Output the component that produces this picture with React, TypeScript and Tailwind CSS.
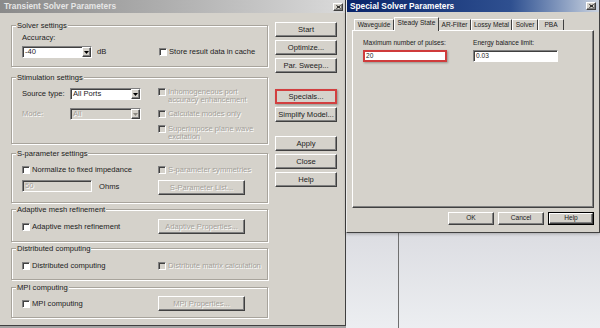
import React from "react";

const raised =
  "border border-t-white border-l-white border-r-[#404040] border-b-[#404040] shadow-[inset_-1px_-1px_0_#808080]";
const sunken =
  "border border-t-[#808080] border-l-[#808080] border-r-white border-b-white shadow-[inset_1px_1px_0_#404040]";
const dis = "text-[#a4a19a] [text-shadow:1px_1px_0_#fff]";

function Arrow({ disabled }: { disabled?: boolean }) {
  return (
    <svg width="5" height="3" viewBox="0 0 5 3">
      <path d="M0 0h5L2.5 3z" fill={disabled ? "#8a8780" : "#000"} />
    </svg>
  );
}

function CloseX() {
  return (
    <svg width="5" height="4" viewBox="0 0 5 4">
      <path d="M0.5 0.5L4.5 3.5M4.5 0.5L0.5 3.5" stroke="#000" strokeWidth="1" />
    </svg>
  );
}

function Check({
  children,
  disabled,
  className = "",
}: {
  children: React.ReactNode;
  disabled?: boolean;
  className?: string;
}) {
  return (
    <div className={`flex items-start gap-[2px] ${className}`}>
      <div
        className={`w-[8px] h-[8px] shrink-0 ${sunken} ${
          disabled ? "bg-[#d5d2cb]" : "bg-white"
        }`}
      />
      <div className={`leading-[8px] whitespace-nowrap ${disabled ? dis : ""}`}>{children}</div>
    </div>
  );
}

function Combo({
  value,
  disabled,
  className = "",
}: {
  value: string;
  disabled?: boolean;
  className?: string;
}) {
  return (
    <div
      className={`flex items-stretch h-[12px] ${sunken} ${
        disabled ? "bg-[#d5d2cb]" : "bg-white"
      } ${className}`}
    >
      <span className={`flex-1 pl-[2px] leading-[10px] ${disabled ? dis : ""}`}>{value}</span>
      <div className={`w-[9px] flex items-center justify-center bg-[#d5d2cb] ${raised}`}>
        <Arrow disabled={disabled} />
      </div>
    </div>
  );
}

function Btn({
  children,
  disabled,
  className = "",
}: {
  children: React.ReactNode;
  disabled?: boolean;
  className?: string;
}) {
  return (
    <div
      className={`flex items-center justify-center h-[15px] bg-[#d5d2cb] leading-none whitespace-nowrap ${raised} ${
        disabled ? dis : ""
      } ${className}`}
    >
      {children}
    </div>
  );
}

function Label({ children }: { children: React.ReactNode }) {
  return (
    <div className="-mt-[5px] ml-[4px] w-fit px-[1px] bg-[#d5d2cb] leading-[10px] whitespace-nowrap">
      {children}
    </div>
  );
}

const group =
  "border border-[#a8a49c] shadow-[1px_1px_0_#fff,inset_1px_1px_0_#fff]";

export default function App() {
  return (
    <div className="w-[600px] h-[328px] flex overflow-hidden font-['Liberation_Sans',Arial,sans-serif] text-[#1c1c1c]">
      {/* Left window */}
      <div className="w-[346px] h-[328px] flex flex-col shrink-0">
        <div className="h-[326px] flex flex-col bg-[#d5d2cb] border-r border-r-[#404040] border-b border-b-[#404040] text-[7.6px]">
          <div className="h-[13px] flex items-center justify-between pl-[4px] pr-[2px] bg-linear-to-r from-[#8a8a8a] via-[#b0b0b0] to-[#dadada]">
            <span className="text-[8.3px] font-bold text-[#e6e6e6] leading-none">
              Transient Solver Parameters
            </span>
            <div className={`w-[10px] h-[8px] flex items-center justify-center bg-[#d5d2cb] ${raised}`}>
              <CloseX />
            </div>
          </div>
          <div className="flex">
            <div className="w-[268px] pl-[11px] flex flex-col">
              {/* Solver settings */}
              <div className={`mt-[12px] h-[42px] ${group}`}>
                <Label>Solver settings</Label>
                <div className="pl-[10px] mt-[2px] leading-[10px]">Accuracy:</div>
                <div className="flex items-center pl-[10px] mt-[3px]">
                  <div className="w-[136px] flex items-center">
                    <Combo value="-40" className="w-[70px]" />
                    <span className="ml-[5px] leading-[8px]">dB</span>
                  </div>
                  <Check className="ml-[1px] -mt-[1px]">Store result data in cache</Check>
                </div>
              </div>
              {/* Stimulation settings */}
              <div className={`mt-[10px] h-[67px] ${group}`}>
                <Label>Stimulation settings</Label>
                <div className="flex pl-[10px]">
                  <div className="w-[136px] flex flex-col">
                    <div className="mt-[5px] flex items-center h-[12px]">
                      <span className="w-[48px] leading-[8px]">Source type:</span>
                      <Combo value="All Ports" className="w-[71px]" />
                    </div>
                    <div className="mt-[8px] flex items-center h-[12px]">
                      <span className={`w-[48px] leading-[8px] ${dis}`}>Mode:</span>
                      <Combo value="All" disabled className="w-[71px]" />
                    </div>
                  </div>
                  <div className="flex flex-col">
                    <Check className="mt-[5px]" disabled>
                      Inhomogeneous port
                      <br />
                      accuracy enhancement
                    </Check>
                    <Check className="mt-[6px]" disabled>
                      Calculate modes only
                    </Check>
                    <Check className="mt-[7px]" disabled>
                      Superimpose plane wave
                      <br />
                      excitation
                    </Check>
                  </div>
                </div>
              </div>
              {/* S-parameter settings */}
              <div className={`mt-[9px] h-[50px] ${group}`}>
                <Label>S-parameter settings</Label>
                <div className="flex pl-[10px] mt-[7px]">
                  <div className="w-[136px]">
                    <Check>Normalize to fixed impedance</Check>
                  </div>
                  <Check disabled>S-parameter symmetries</Check>
                </div>
                <div className="flex pl-[10px] mt-[6px] items-start">
                  <div className="w-[136px] flex items-start">
                    <div className={`w-[70px] h-[12px] bg-[#d5d2cb] pl-[2px] leading-[10px] ${sunken}`}>
                      <span className={dis}>50</span>
                    </div>
                    <span className="ml-[7px] mt-[3px] leading-[8px]">Ohms</span>
                  </div>
                  <Btn disabled className="w-[87px]">
                    S-Parameter List...
                  </Btn>
                </div>
              </div>
              {/* Adaptive mesh refinement */}
              <div className={`mt-[6px] h-[33px] ${group}`}>
                <Label>Adaptive mesh refinement</Label>
                <div className="flex pl-[10px] mt-[4px] items-center">
                  <div className="w-[136px]">
                    <Check>Adaptive mesh refinement</Check>
                  </div>
                  <Btn disabled className="w-[87px]">
                    Adaptive Properties...
                  </Btn>
                </div>
              </div>
              {/* Distributed computing */}
              <div className={`mt-[6px] h-[32px] ${group}`}>
                <Label>Distributed computing</Label>
                <div className="flex pl-[10px] mt-[8px]">
                  <div className="w-[136px]">
                    <Check>Distributed computing</Check>
                  </div>
                  <Check disabled>Distribute matrix calculation</Check>
                </div>
              </div>
              {/* MPI computing */}
              <div className={`mt-[7px] h-[31px] ${group}`}>
                <Label>MPI computing</Label>
                <div className="flex pl-[10px] mt-[3px] items-center">
                  <div className="w-[136px]">
                    <Check>MPI computing</Check>
                  </div>
                  <Btn disabled className="w-[87px]">
                    MPI Properties...
                  </Btn>
                </div>
              </div>
            </div>
            {/* Buttons column */}
            <div className="ml-[7px] w-[62px] flex flex-col">
              <Btn className="mt-[9px]">Start</Btn>
              <Btn className="mt-[3px]">Optimize...</Btn>
              <Btn className="mt-[3px]">Par. Sweep...</Btn>
              <div className="mt-[16px] h-[15px] flex items-center justify-center bg-[#d5d2cb] border-2 border-[#d23f3f] shadow-[1px_1px_2px_rgba(0,0,0,0.3)] leading-none">
                Specials...
              </div>
              <Btn className="mt-[3px]">Simplify Model...</Btn>
              <Btn className="mt-[14px]">Apply</Btn>
              <Btn className="mt-[3px]">Close</Btn>
              <Btn className="mt-[3px]">Help</Btn>
            </div>
          </div>
        </div>
        <div className="h-[2px] bg-[#a3a3a3]" />
      </div>

      {/* Right column */}
      <div className="flex-1 flex flex-col">
        <div className="h-[233px] flex flex-col bg-[#d5d2cb] border-l border-l-[#ececec] border-r border-r-[#404040] border-b border-b-[#404040] shadow-[0_1px_3px_rgba(0,0,0,0.25)] relative z-10 text-[6.6px]">
          <div className="h-[12px] flex items-center justify-between pl-[3px] pr-[3px] bg-linear-to-r from-[#0a246a] via-[#2f5090] via-65% to-[#ccd4e0]">
            <span className="text-[8.3px] font-bold text-white leading-none">
              Special Solver Parameters
            </span>
            <div className={`w-[10px] h-[8px] flex items-center justify-center bg-[#d5d2cb] ${raised}`}>
              <CloseX />
            </div>
          </div>
          <div className="px-[5px] pt-[5px] flex flex-col">
            <div className="flex items-end h-[13px] pl-[2px]">
              <div className="w-[40px] h-[11px] flex items-center justify-center border-t border-l border-t-white border-l-white border-r border-r-[#404040] leading-none">
                Waveguide
              </div>
              <div className="relative z-10 w-[45px] h-[14px] -mb-[1px] flex items-center justify-center bg-[#d5d2cb] border-t border-l border-t-white border-l-white border-r border-r-[#404040] leading-none pb-[2px]">
                Steady State
              </div>
              <div className="w-[32px] h-[11px] flex items-center justify-center border-t border-t-white border-r border-r-[#404040] leading-none">
                AR-Filter
              </div>
              <div className="w-[41px] h-[11px] flex items-center justify-center border-t border-l border-t-white border-l-white border-r border-r-[#404040] leading-none">
                Lossy Metal
              </div>
              <div className="w-[26px] h-[11px] flex items-center justify-center border-t border-l border-t-white border-l-white border-r border-r-[#404040] leading-none">
                Solver
              </div>
              <div className="w-[26px] h-[11px] flex items-center justify-center border-t border-l border-t-white border-l-white border-r border-r-[#404040] leading-none">
                PBA
              </div>
            </div>
            <div className={`h-[178px] ${raised}`}>
              <div className="flex pl-[10px] pt-[8px]">
                <div className="w-[110px] flex flex-col">
                  <div className="leading-[8px]">Maximum number of pulses:</div>
                  <div className="mt-[3px] w-[84px] h-[12px] border-2 border-[#cf3b3b] bg-white pl-[1px] leading-[8px] shadow-[1px_1px_2px_rgba(0,0,0,0.3)]">
                    20
                  </div>
                </div>
                <div className="flex flex-col">
                  <div className="leading-[8px]">Energy balance limit:</div>
                  <div className={`mt-[3px] w-[85px] h-[12px] bg-white pl-[2px] leading-[10px] ${sunken}`}>
                    0.03
                  </div>
                </div>
              </div>
            </div>
            <div className="mt-[4px] flex justify-end gap-[4px]">
              <Btn className="w-[46px] !h-[13px]">OK</Btn>
              <Btn className="w-[46px] !h-[13px]">Cancel</Btn>
              <div className="w-[46px] h-[13px] border border-black">
                <div className={`w-full h-full flex items-center justify-center leading-none bg-[#d5d2cb] ${raised}`}>
                  Help
                </div>
              </div>
            </div>
          </div>
        </div>
        <div className="flex-1 flex bg-linear-to-b from-[#dcdde2] to-[#eceef1]">
          <div className="w-[53px] border-r border-r-[#6f6f6f]" />
        </div>
      </div>
    </div>
  );
}
